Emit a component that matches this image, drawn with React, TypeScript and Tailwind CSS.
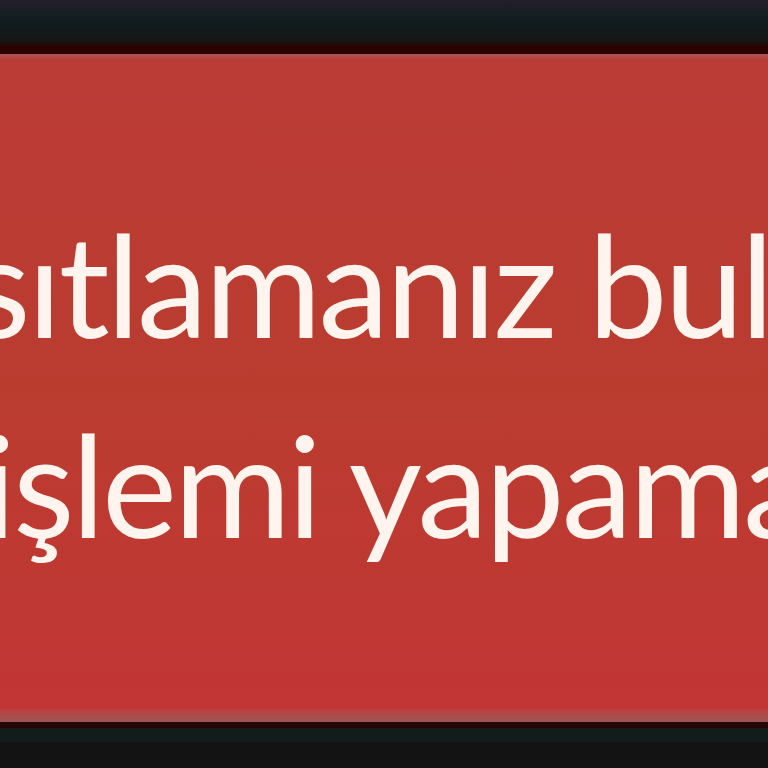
export default function App() {
  return (
    <div className="h-[768px] w-[768px] overflow-hidden bg-[#131313] flex flex-col">
      {/* top bar */}
      <div className="h-[42px] shrink-0 bg-gradient-to-b from-[#231e2c] via-[#0f1d1e] to-[#161616]" />
      <div className="h-[12px] shrink-0 bg-gradient-to-b from-[#1e0f10] via-[#2a0000] to-[#2a0202]" />
      {/* alert panel */}
      <div className="relative h-[668px] shrink-0 overflow-hidden bg-gradient-to-b from-[#bb3b36] via-[#ba3c2f] to-[#c23535]">
        <div className="absolute inset-x-0 top-0 h-[6px] bg-gradient-to-b from-[#a85454] to-[#bb3b38]" />
        <div className="absolute inset-x-0 bottom-0 h-[14px] bg-gradient-to-b from-[#c03a3a] to-[#9a5656]" />
        <div
          className="pt-[129px] whitespace-nowrap text-[142px] leading-[200px] tracking-[-3px] text-[#fff4ee]"
          style={{ fontFamily: 'Lato, "Open Sans", sans-serif' }}
        >
          <p className="ml-[-31px]">sıtlamanız bulunmaktadır</p>
          <p className="ml-[-18px]">işlemi yapamazsınız</p>
        </div>
      </div>
      <div className="h-[6px] shrink-0 bg-[#250505]" />
      <div className="h-[14px] shrink-0 bg-[#121c1a]" />
      <div className="flex-1 bg-[#131313]" />
    </div>
  );
}
